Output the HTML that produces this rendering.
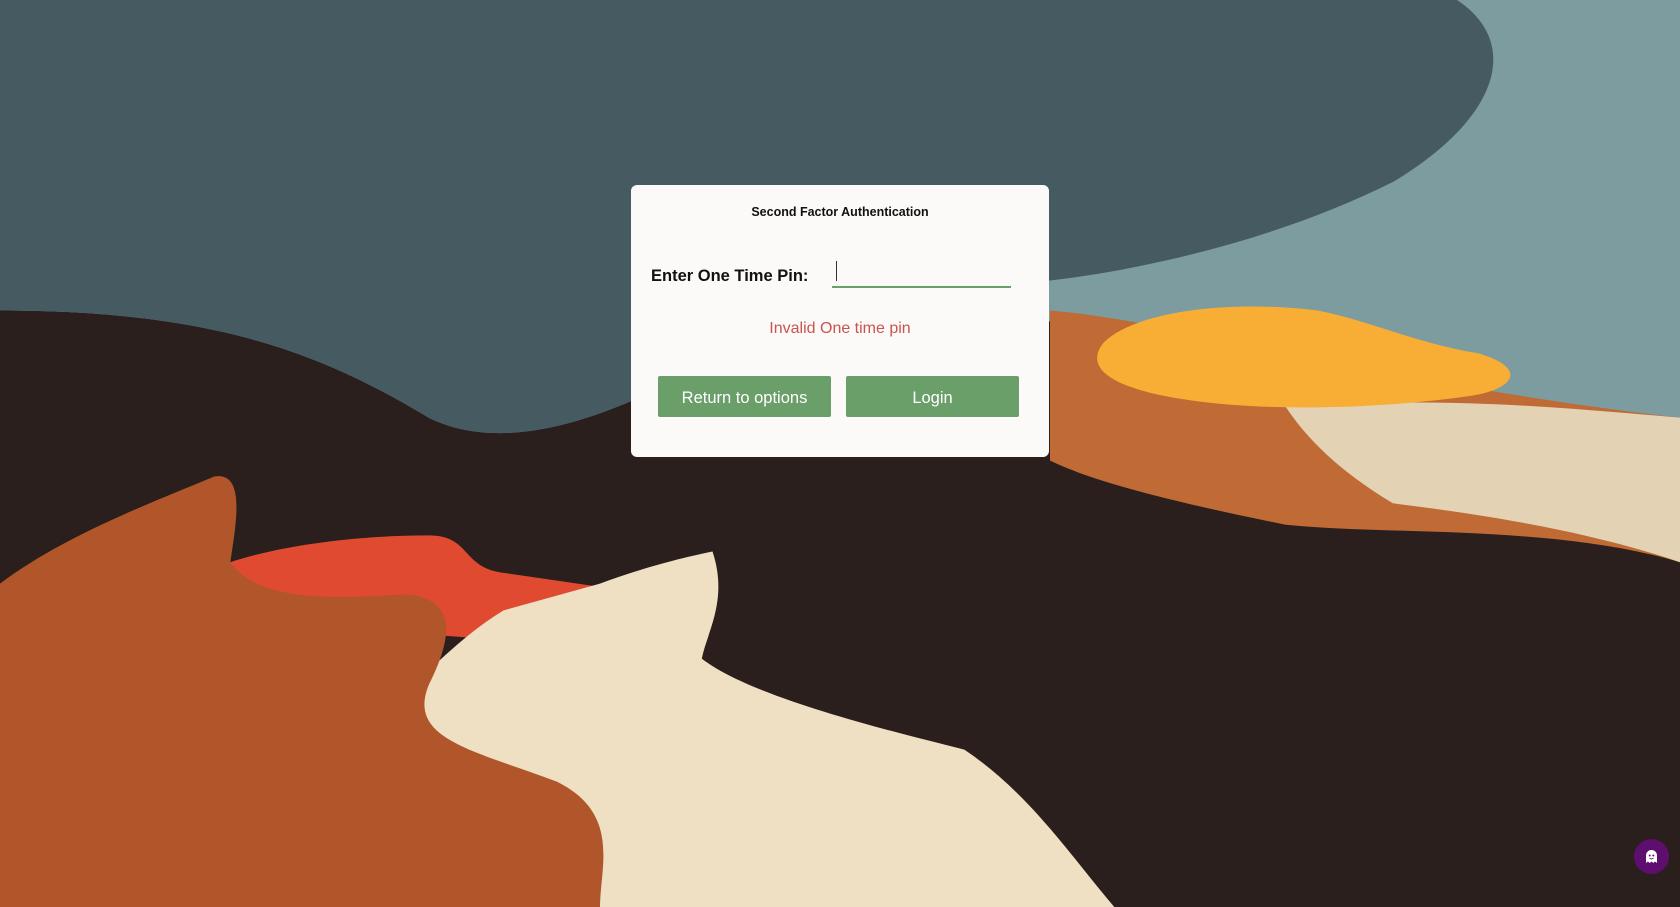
<!DOCTYPE html>
<html><head><style>
html,body{margin:0;padding:0;width:1680px;height:907px;overflow:hidden;background:#2a1f1d;font-family:"Liberation Sans",sans-serif}
svg.bg{position:absolute;left:0;top:0}
.card{position:absolute;left:631px;top:185px;width:418px;height:272px;background:#fbfaf8;border-radius:6px}
.t{position:absolute;left:0;width:100%;top:20px;text-align:center;font-size:12.5px;font-weight:bold;color:#111}
.lbl{position:absolute;left:20px;top:82px;font-size:16.5px;font-weight:bold;color:#111}
.inp{position:absolute;left:201px;top:58px;width:179px;height:43px;border-bottom:2px solid #6a9f6a}
.inp:before{content:"";position:absolute;left:4px;top:18px;width:1px;height:20px;background:#333}
.err{position:absolute;left:0;width:100%;top:135px;text-align:center;font-size:16px;color:#c8554f}
.btn{position:absolute;top:191px;width:173px;height:41px;background:#6a9f6a;color:#fff;font-size:16.5px;line-height:44px;text-align:center;border-radius:2px}
.ghost{position:absolute;left:1634px;top:839px;width:35px;height:35px;border-radius:50%;background:#5e0e6e}
.ghost svg{position:absolute;left:11px;top:10px}
</style></head><body>
<svg class="bg" width="1680" height="907" viewBox="0 0 1568 847" preserveAspectRatio="none">
<rect width="1568" height="847" fill="#2a1f1d"/>
<path d="M0 0H1568V520C1500 490 1300 480 1200 470 1100 460 1030 450 980 430L980 300C800 330 700 320 620 360 540 400 460 420 400 390 300 330 200 290 0 290Z" fill="#7c9ca0"/>
<path d="M0 0H1360C1420 40 1400 110 1300 170 1200 220 1080 250 980 262 800 300 700 320 620 360 540 400 460 420 400 390 300 330 200 290 0 290Z" fill="#465a62"/>
<path d="M980 290C1100 300 1300 360 1568 390V525C1450 490 1300 500 1200 490 1100 470 1020 450 980 430Z" fill="#c06a35"/>
<path d="M1200 380C1350 370 1450 380 1568 390V525C1480 495 1380 480 1300 470 1250 440 1220 410 1200 380Z" fill="#e3d2b4"/>
<path d="M1030 320C1060 290 1150 280 1230 290 1280 300 1320 320 1380 330 1430 345 1410 365 1370 370 1300 380 1200 385 1120 375 1040 365 1010 345 1030 320Z" fill="#f8ad35"/>
<path d="M215 525C260 510 330 500 400 500 440 500 430 530 470 535L560 548 500 600 230 580Z" fill="#e04a30"/>
<path d="M560 545C600 530 640 520 665 515 680 560 660 590 655 615 700 650 820 680 900 700 960 740 1000 800 1040 847H330C310 800 300 740 330 690 380 650 420 600 470 570Z" fill="#efdfc3"/>
<path d="M0 545C60 500 140 470 200 445 230 440 220 490 215 525 240 560 300 560 380 555 430 560 420 600 400 640 380 690 440 700 520 730 580 760 560 810 560 847H0Z" fill="#b0562a"/>
</svg>
<div class="card">
<div class="t">Second Factor Authentication</div>
<div class="lbl">Enter One Time Pin:</div>
<div class="inp"></div>
<div class="err">Invalid One time pin</div>
<div class="btn" style="left:27px">Return to options</div>
<div class="btn" style="left:215px">Login</div>
</div>
<div class="ghost"><svg width="13" height="15" viewBox="0 0 13 15"><path d="M1 14V6.5A5.5 5.5 0 0 1 12 6.5V14L10 12.5 8.3 14 6.5 12.5 4.7 14 3 12.5Z" fill="#fff"/><circle cx="4.7" cy="6.5" r="1" fill="#5e0e6e"/><circle cx="8.3" cy="6.5" r="1" fill="#5e0e6e"/><path d="M4.5 9.2Q6.5 10.8 8.5 9.2" stroke="#5e0e6e" stroke-width="0.9" fill="none"/></svg></div>
</body></html>
